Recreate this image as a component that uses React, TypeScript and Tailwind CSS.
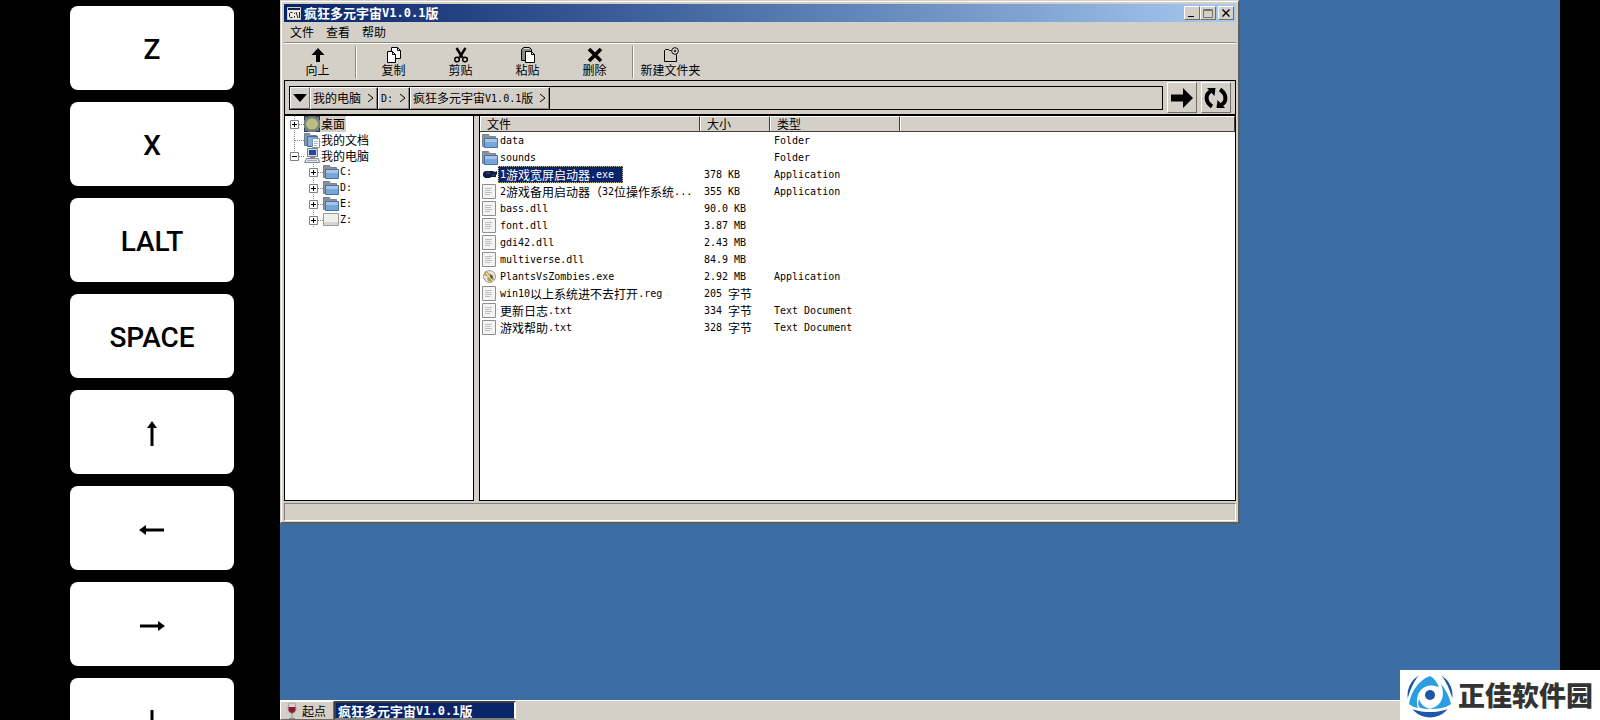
import React from "react";

const CJK_SPLIT = /([\u2e80-\u9fff\uff00-\uffef]+)/;

// Chinese glyphs and latin glyphs sit on a 2:1 cell grid, so they need separate sizes
const Mixed: React.FC<{ text: string; bold?: boolean }> = ({ text, bold }) => (
	<span className="flex h-full items-center whitespace-pre">
		{text.split(CJK_SPLIT).map((part, i) =>
			i % 2 === 1 ? (
				<span key={i}>{part}</span>
			) : (
				<span key={i} className={bold ? "font-['DejaVu_Sans_Mono',monospace] text-[12px]" : "font-['DejaVu_Sans_Mono',monospace] text-[10px]"}>
					{part}
				</span>
			)
		)}
	</span>
);

const raised = "border border-t-white border-l-white border-b-[#6f6d68] border-r-[#6f6d68] bg-[#d4d0c8]";

/* ---------- icons ---------- */

const FolderIcon = () => (
	<svg width="16" height="16" viewBox="0 0 16 16" className="shrink-0">
		<path d="M.5 1.5h6l1 2h6v10H.5z" fill="#8d9296" stroke="#7b8186" />
		<path d="M2.500 5.500h13v9h-13z" fill="#79a6d8" stroke="#4672aa" />
		<path d="M3 6h12v3H3z" fill="#a3c3e8" />
	</svg>
);

const DocIcon = () => (
	<svg width="16" height="16" viewBox="0 0 16 16" className="shrink-0">
		<path d="M.5.5h13v14H.5z" fill="#f4f4f4" stroke="#8f8f8f" />
		<path d="M3 4.500h7M3 6.500h6M3 8.500h7M3 10.500h5" stroke="#bdbdbd" />
	</svg>
);

const GameIcon = () => (
	<svg width="16" height="16" viewBox="0 0 16 16" className="shrink-0">
		<path d="M1 6l2-2h8l2 1 2-1v3l-1 1v2H9l-1 1H3L1 9z" fill="#101d3c" />
		<path d="M4 6h4M10 8h3" stroke="#3c588f" />
	</svg>
);

const ZombieIcon = () => (
	<svg width="16" height="16" viewBox="0 0 16 16" className="shrink-0">
		<circle cx="7.500" cy="7.500" r="6" fill="#e6e6de" stroke="#9a9a90" />
		<path d="M3 2l5 3-1 3-5-2zM5 9l3-2 5 3-2 1-2 2-3-1z" fill="#b5a34a" />
		<path d="M8 5l3 2-1 4-2-2z" fill="#57532f" />
		<path d="M4 4l7 8" stroke="#fff" />
	</svg>
);

const DesktopIcon = () => (
	<svg width="16" height="16" viewBox="0 0 16 16" className="shrink-0">
		<path d="M0 0h16v16H0z" fill="#6d7b86" />
		<path d="M0 4V0h4M12 0h4v4M16 12v4h-4M4 16H0v-4" fill="none" stroke="#2e3b4b" strokeWidth="2" />
		<ellipse cx="8" cy="8" rx="6.500" ry="6" fill="#b9bd86" stroke="#83885c" />
	</svg>
);

const DocumentsIcon = () => (
	<svg width="16" height="16" viewBox="0 0 16 16" className="shrink-0">
		<path d="M.5 1.500h5l1 2h6v10H.5z" fill="#8d9296" stroke="#5f7f9f" />
		<path d="M3.500 4.500h10v10h-10z" fill="#86b0dc" stroke="#3d6ca6" />
		<path d="M8.500 6.500h7v9h-7z" fill="#fff" stroke="#8095aa" />
		<path d="M10 9.500h4M10 11.500h4M10 13.500h3" stroke="#a9b6c4" />
	</svg>
);

const ComputerIcon = () => (
	<svg width="16" height="16" viewBox="0 0 16 16" className="shrink-0">
		<path d="M3.500.5h10v8h-10z" fill="#d8dce2" stroke="#77808c" />
		<path d="M5 2h7v5H5z" fill="#2547a0" />
		<path d="M6 9h5v2H6z" fill="#8b9199" />
		<path d="M2.500 10.500h12l1 4h-15z" fill="#e4e6e8" stroke="#7f858c" />
		<path d="M3 12.500h10" stroke="#a5a9af" />
	</svg>
);

const DriveIcon = () => (
	<svg width="16" height="16" viewBox="0 0 16 16" className="shrink-0">
		<path d="M.5 1.500h15v12H.5z" fill="#f1f0ee" stroke="#999" />
		<path d="M1 10h14v3H1z" fill="#d6d4d0" />
	</svg>
);

const ConsoleIcon = () => (
	<svg width="16" height="16" viewBox="0 0 16 16" className="shrink-0">
		<path d="M1.500 2.500h13v12h-13z" fill="#ecebe6" stroke="#d4d0c8" />
		<path d="M2 3h12v2H2z" fill="#17244a" />
		<path d="M6.500 7.500H4.500l-1 1v3l1 1h2M8.500 8v1M8.500 11v1.500M10 7l2 6M13.500 7v6" fill="none" stroke="#222" />
	</svg>
);

const UpIcon = () => (
	<svg width="16" height="16" viewBox="0 0 16 16">
		<path d="M8 1l6.500 7H10v7H6V8H1.500z" />
	</svg>
);

const CopyIcon = () => (
	<svg width="16" height="16" viewBox="0 0 16 16" fill="#fff" stroke="#000">
		<path d="M5.500.5h6l3 3v8h-9z" />
		<path d="M11.500.5v3h3" fill="none" />
		<path d="M1.500 4.500h5l3 3v8h-8z" />
		<path d="M6.500 4.500v3h3" fill="none" />
	</svg>
);

const CutIcon = () => (
	<svg width="16" height="16" viewBox="0 0 16 16" fill="none" stroke="#000">
		<path d="M3.500 1l6 9.500M12.500 1l-6 9.500" strokeWidth="2.400" />
		<circle cx="4" cy="12.500" r="2.300" strokeWidth="1.500" />
		<circle cx="12" cy="12.500" r="2.300" strokeWidth="1.500" />
	</svg>
);

const PasteIcon = () => (
	<svg width="16" height="16" viewBox="0 0 16 16" stroke="#000">
		<path d="M1.500 2.500l2-2h6l2 2v11h-10z" fill="#8d8b87" />
		<path d="M4 1.500h5" stroke="#ddd" />
		<path d="M5.500 4.500h6l3 3v8h-9z" fill="#fff" />
		<path d="M11.500 4.500v3h3" fill="none" />
	</svg>
);

const DeleteIcon = () => (
	<svg width="16" height="16" viewBox="0 0 16 16">
		<path d="M2 2l12 12M14 2L2 14" stroke="#000" strokeWidth="3.600" />
	</svg>
);

const NewFolderIcon = () => (
	<svg width="16" height="16" viewBox="0 0 16 16" fill="none" stroke="#000">
		<path d="M8.500 3.500h-2l-1-1h-3l-1 1v11h12v-7" />
		<circle cx="12" cy="4" r="3.300" fill="#f4f2ee" />
		<path d="M10.500 4h3M12 2.500v3" />
	</svg>
);

const WineIcon = () => (
	<svg width="12" height="18" viewBox="0 0 12 18" className="shrink-0">
		<path d="M3 1h6l1 6c0 3-2 4-4 4s-4-1-4-4z" fill="#dcd3d1" stroke="#a9a09c" />
		<path d="M2.500 5h7v3c-.5 2-2 3-3.500 3s-3-1-3.500-3z" fill="#8d1a2e" />
		<path d="M6 11v5M3 16.500h6" stroke="#8f8a86" />
	</svg>
);

const SiteLogo = () => (
	<svg width="48" height="48" viewBox="0 0 48 48" className="shrink-0">
		<circle cx="24" cy="24" r="22.500" fill="#1c57a8" />
		<path d="M17 0h14C40 8 45 20 48 35c-13 8-35 8-48 0C3 20 8 8 17 0z" fill="#fff" />
		<path d="M24 5c4 2 7 6 9 11-12-5-23 2-22 16 0 2 0 3 1 5-4-1-7-2-9-4C5 20 13 9 24 5z" fill="#2a9fe0" />
		<path d="M35 13c5 6 8 12 10 20-5 4-13 5-21 5 11-3 16-12 11-25z" fill="#2a9fe0" />
		<path d="M13 28c2 6 6 9 12 10-5 0-9 0-12-2-1-2-1-5 0-8z" fill="#2a9fe0" />
		<circle cx="24" cy="24" r="5" fill="#1c57a8" />
	</svg>
);

/* ---------- on-screen keys ---------- */

const ArrowGlyph: React.FC<{ className: string }> = ({ className }) => (
	<svg width="26" height="26" viewBox="0 0 26 26" className={className}>
		<path d="M13 0l5 7H8z" />
		<path d="M13 6v19" stroke="#000" strokeWidth="3" />
	</svg>
);

const keys = [
	{ id: "z", label: "Z", content: "Z" },
	{ id: "x", label: "X", content: "X" },
	{ id: "lalt", label: "LALT", content: "LALT" },
	{ id: "space", label: "SPACE", content: "SPACE" },
	{ id: "up", label: "Up", content: <ArrowGlyph className="" /> },
	{ id: "left", label: "Left", content: <ArrowGlyph className="-rotate-90" /> },
	{ id: "right", label: "Right", content: <ArrowGlyph className="rotate-90" /> },
	{ id: "down", label: "Down", content: <ArrowGlyph className="rotate-180" /> },
];

const KeyPad = () => (
	<aside className="flex w-[280px] shrink-0 flex-col gap-3 overflow-hidden pr-[46px] pl-[70px] pt-[6px] font-['Roboto',sans-serif]">
		{keys.map((key) => (
			<button key={key.id} aria-label={key.label} className="flex h-[84px] shrink-0 items-center justify-center rounded-lg bg-white pt-1 text-[28px] font-medium text-black">
				{key.content}
			</button>
		))}
	</aside>
);

/* ---------- file manager ---------- */

const TitleBar = () => (
	<header className="flex h-[18px] items-center bg-linear-to-r from-[#0a246a] to-[#a6caf0] pr-0.5 pl-0.5">
		<ConsoleIcon />
		<h1 className="h-[18px] flex-1 pl-0.5 text-[13px] leading-[18px] font-bold text-white">
			<Mixed text="疯狂多元宇宙V1.0.1版" bold />
		</h1>
		<button aria-label="Minimize" className={`${raised} flex h-[14px] w-4 items-end justify-start`}>
			<svg width="14" height="12" viewBox="0 0 14 12">
				<path d="M3 9h6v1H3z" />
			</svg>
		</button>
		<button aria-label="Maximize" className={`${raised} flex h-[14px] w-4 items-center justify-center`}>
			<svg width="14" height="12" viewBox="0 0 14 12" fill="none" stroke="#77746e">
				<path d="M2.500 2.500h9v8h-9zM2 3.500h10" />
			</svg>
		</button>
		<button aria-label="Close" className={`${raised} ml-0.5 flex h-[14px] w-4 items-center justify-center`}>
			<svg width="14" height="12" viewBox="0 0 14 12">
				<path d="M3.500 2.500l7 7M10.500 2.500l-7 7" stroke="#000" strokeWidth="1.400" />
			</svg>
		</button>
	</header>
);

const tools = [
	{ id: 1, label: "向上", icon: <UpIcon />, divider: true },
	{ id: 2, label: "复制", icon: <CopyIcon /> },
	{ id: 3, label: "剪贴", icon: <CutIcon /> },
	{ id: 4, label: "粘贴", icon: <PasteIcon /> },
	{ id: 5, label: "删除", icon: <DeleteIcon />, divider: true },
	{ id: 6, label: "新建文件夹", icon: <NewFolderIcon /> },
];

const Toolbar = () => (
	<div className="flex h-[38px] items-center border-t border-[#8c8983] shadow-[inset_0_1px_0_#fff]">
		{tools.map((tool) => (
			<React.Fragment key={tool.id}>
				<button className="flex w-[67px] flex-col items-center whitespace-nowrap">
					{tool.icon}
					<span className="leading-[14px]">{tool.label}</span>
				</button>
				{tool.divider && <span className="mr-[3px] ml-1 h-[32px] w-0.5 border-r border-l border-r-white border-l-[#8c8983]" />}
			</React.Fragment>
		))}
	</div>
);

const crumbs = ["我的电脑", "D:", "疯狂多元宇宙V1.0.1版"];

const AddressBar = () => (
	<div className="flex h-[36px] items-center border border-b-2 border-black pr-1 pl-1">
		<nav className="mr-1 flex h-6 flex-1 border border-black">
			<button aria-label="History" className={`${raised} flex w-5 items-center justify-center`}>
				<svg width="14" height="8" viewBox="0 0 14 8">
					<path d="M0 0h14L7 8z" />
				</svg>
			</button>
			{crumbs.map((crumb) => (
				<button key={crumb} className="flex items-center gap-[6px] border-t border-r border-l border-t-white border-r-black border-l-white pr-[3px] pl-0.5 shadow-[inset_-1px_-1px_0_#8c8983]">
					<Mixed text={crumb} />
					<svg width="7" height="10" viewBox="0 0 7 10" fill="none" stroke="#000">
						<path d="M1 1l5 4-5 4" />
					</svg>
				</button>
			))}
		</nav>
		<button aria-label="Go" className={`${raised} mr-1 flex h-[31px] w-[30px] items-center justify-center`}>
			<svg width="24" height="20" viewBox="0 0 24 20">
				<path d="M1 6.500h12V0l10 10-10 10v-6.500H1z" />
			</svg>
		</button>
		<button aria-label="Refresh" className={`${raised} flex h-[31px] w-[30px] items-center justify-center`}>
			<svg width="24" height="22" viewBox="0 0 24 22">
				<path d="M8 19.500C1 15 1 7 7 4M16 2.500C23 7 23 15 17 18" fill="none" stroke="#000" strokeWidth="4" />
				<path d="M3 1h8.500l-1 8zM21 21h-8.500l1-8z" />
			</svg>
		</button>
	</div>
);

const ExpandBox: React.FC<{ open?: boolean }> = ({ open }) => (
	<svg width="17" height="16" viewBox="0 0 17 16" className="shrink-0" fill="none" stroke="#000">
		<path d="M12 8.500h5" stroke="#808080" strokeDasharray="1 1" />
		{open ? <path d="M7.500 0v5" stroke="#808080" strokeDasharray="1 1" /> : <path d="M7.500 0v16" stroke="#808080" strokeDasharray="1 1" />}
		<path d="M3.500 4.500h8v8h-8z" fill="#fff" stroke="#808080" />
		<path d={open ? "M5 8.500h5" : "M5 8.500h5M7.500 6v5"} />
	</svg>
);

const drives = [
	{ name: "C:", icon: <FolderIcon /> },
	{ name: "D:", icon: <FolderIcon /> },
	{ name: "E:", icon: <FolderIcon /> },
	{ name: "Z:", icon: <DriveIcon /> },
];

const FolderTree = () => (
	<ul className="w-[190px] shrink-0 border-r border-b border-l border-black bg-white pl-0.5 leading-4">
		<li className="flex h-4">
			<ExpandBox />
			<DesktopIcon />
			<span className="bg-[#d4d0c8] px-px">桌面</span>
		</li>
		<li className="flex h-4">
			<svg width="17" height="16" viewBox="0 0 17 16" className="shrink-0" stroke="#808080" strokeDasharray="1 1">
				<path d="M7.500 0v16M8 8.500h9" />
			</svg>
			<DocumentsIcon />
			<span className="px-px">我的文档</span>
		</li>
		<li>
			<div className="flex h-4">
				<ExpandBox open />
				<ComputerIcon />
				<span className="px-px">我的电脑</span>
			</div>
			<ul className="pl-[19px]">
				{drives.map((drive) => (
					<li key={drive.name} className="flex h-4">
						<ExpandBox />
						{drive.icon}
						<span className="h-4 px-px">
							<Mixed text={drive.name} />
						</span>
					</li>
				))}
			</ul>
		</li>
	</ul>
);

const files = [
	{ name: "data", size: "", type: "Folder", icon: <FolderIcon /> },
	{ name: "sounds", size: "", type: "Folder", icon: <FolderIcon /> },
	{ name: "1游戏宽屏启动器.exe", size: "378 KB", type: "Application", icon: <GameIcon />, selected: true },
	{ name: "2游戏备用启动器（32位操作系统...", size: "355 KB", type: "Application", icon: <DocIcon /> },
	{ name: "bass.dll", size: "90.0 KB", type: "", icon: <DocIcon /> },
	{ name: "font.dll", size: "3.87 MB", type: "", icon: <DocIcon /> },
	{ name: "gdi42.dll", size: "2.43 MB", type: "", icon: <DocIcon /> },
	{ name: "multiverse.dll", size: "84.9 MB", type: "", icon: <DocIcon /> },
	{ name: "PlantsVsZombies.exe", size: "2.92 MB", type: "Application", icon: <ZombieIcon /> },
	{ name: "win10以上系统进不去打开.reg", size: "205 字节", type: "", icon: <DocIcon /> },
	{ name: "更新日志.txt", size: "334 字节", type: "Text Document", icon: <DocIcon /> },
	{ name: "游戏帮助.txt", size: "328 字节", type: "Text Document", icon: <DocIcon /> },
];

const headCell = "h-4 border-t border-r border-b border-t-white border-r-[#404040] border-b-[#404040] bg-[#d4d0c8] p-0 pl-[7px] text-left font-normal leading-[14px] shadow-[inset_1px_0_0_#fff]";

const FileList = () => (
	<div className="min-w-0 flex-1 border-r border-b border-l border-black bg-white">
		<table className="w-full table-fixed border-separate border-spacing-0 whitespace-nowrap">
			<colgroup>
				<col className="w-[220px]" />
				<col className="w-[70px]" />
				<col className="w-[130px]" />
				<col />
			</colgroup>
			<thead>
				<tr>
					<th className={headCell}>文件</th>
					<th className={headCell}>大小</th>
					<th className={headCell}>类型</th>
					<td className={headCell} />
				</tr>
			</thead>
			<tbody>
				{files.map((file) => (
					<tr key={file.name}>
						<td className="p-0">
							<div className="flex h-[17px] items-center pl-0.5 leading-4">
								{file.icon}
								<span className={file.selected ? "h-[17px] border border-dotted border-[#c8b878] bg-[#0a246a] pr-2 pl-px leading-[15px] text-white" : "h-4 pl-0.5"}>
									<Mixed text={file.name} />
								</span>
							</div>
						</td>
						<td className="p-0 pl-1">
							<div className="h-4 leading-4">
								<Mixed text={file.size} />
							</div>
						</td>
						<td className="p-0 pl-1">
							<div className="h-4 leading-4">
								<Mixed text={file.type} />
							</div>
						</td>
						<td className="p-0" />
					</tr>
				))}
			</tbody>
		</table>
	</div>
);

const FileManager = () => (
	<section className="flex h-[524px] w-3/4 flex-col border-t border-r-2 border-b-2 border-l border-t-[#d4d0c8] border-r-[#5f5d59] border-b-[#5f5d59] border-l-[#d4d0c8] bg-[#d4d0c8] pt-[3px] pr-[2px] pl-[3px] shadow-[inset_1px_1px_0_#fff]">
		<TitleBar />
		<nav className="flex h-5 gap-3 pl-[6px] leading-5">
			<button>文件</button>
			<button>查看</button>
			<button>帮助</button>
		</nav>
		<Toolbar />
		<AddressBar />
		<div className="flex min-h-0 flex-1 gap-[5px]">
			<FolderTree />
			<FileList />
		</div>
		<footer className="mt-0.5 mb-px h-[18px] border border-t-[#808080] border-r-white border-b-white border-l-[#808080] bg-[#d6cfc5]" />
	</section>
);

const App: React.FC = () => {
	return (
		<div className="relative flex h-screen overflow-hidden bg-black font-['Noto_Sans_CJK_SC',sans-serif] text-[12px] text-black">
			<KeyPad />
			<main className="mr-10 flex min-w-0 flex-1 flex-col bg-[#3a6ea5]">
				<div className="flex-1">
					<FileManager />
				</div>
				<footer className="flex h-5 border-t border-white bg-[#d4d0c8]">
					<button className={`${raised} flex w-[54px] items-center gap-1 pl-[5px] leading-[16px]`}>
						<WineIcon />
						<span>起点</span>
					</button>
					<button className="flex w-[182px] items-center border-2 border-t-[#404040] border-r-white border-b-[#808080] border-l-[#404040] bg-[#0a246a] pl-0.5 text-[13px] leading-[14px] font-bold text-white">
						<Mixed text="疯狂多元宇宙V1.0.1版" bold />
					</button>
				</footer>
			</main>
			<a href="#" className="absolute right-0 bottom-0 flex h-[50px] w-[200px] items-center gap-1 bg-white pl-[6px] text-[27px] leading-[50px] font-black whitespace-nowrap text-[#333]">
				<SiteLogo />
				正佳软件园
			</a>
		</div>
	);
};

export default App;
